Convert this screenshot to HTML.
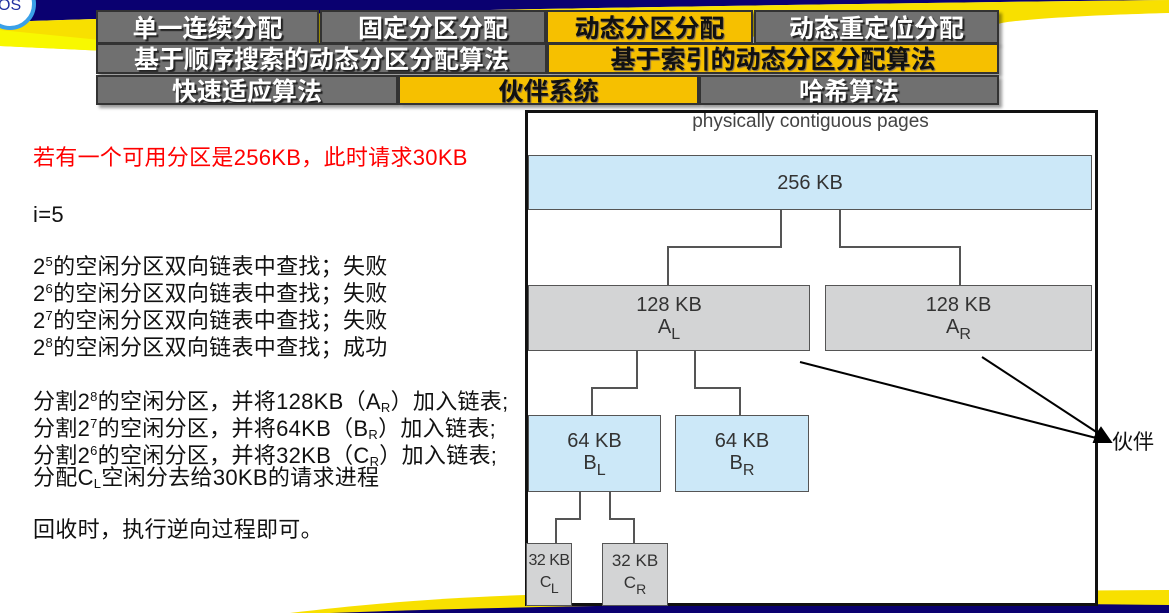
<!DOCTYPE html>
<html><head><meta charset="utf-8"><style>
*{margin:0;padding:0;box-sizing:border-box}
body{width:1169px;height:613px;position:relative;overflow:hidden;background:#fff;font-family:"Liberation Sans","Noto Sans CJK SC",sans-serif}
.bg{position:absolute;left:0;top:0}
.btn{position:absolute;background:#707070;border:2px solid #333;color:#fff;font-weight:bold;text-align:center;font-family:"Noto Sans CJK SC","WenQuanYi Zen Hei",sans-serif;text-shadow:2px 2px 1px #222;box-shadow:3px 3px 3px rgba(0,0,0,.4);white-space:nowrap;overflow:hidden;font-size:25px}
.y{background:#f6c000;color:#111;text-shadow:1px 1px 1px #765}
.t{position:absolute;left:33px;font-size:22px;letter-spacing:0.3px;color:#111;white-space:nowrap;line-height:24px;font-family:"Liberation Sans","Noto Sans CJK SC",sans-serif}
sup{font-size:13px;vertical-align:8px}
sub{font-size:13px;vertical-align:-3px}
.box{position:absolute;border:1.5px solid #555;color:#333;font-size:19px;text-align:center;line-height:22px;font-family:"Liberation Sans",sans-serif;white-space:nowrap}
.box sub{font-size:16px;vertical-align:-6px}
.b{background:#cce8f8}.g{background:#d3d4d5}
</style></head><body>
<svg class="bg" width="1169" height="613">
<path d="M0 0 H1169 V0 L1000 2 C700 6 300 12 0 22 Z" fill="#0a0070"/>
<path d="M0 22 C300 12 700 6 1000 2 L1169 0 V13 C1050 16 1000 22 999 24 L300 60 L0 46 Z" fill="#f8e000"/>
<path d="M0 30 C100 40 200 50 300 60 L0 46 Z" fill="#f8f800"/>
<path d="M290 613 C400 600 480 596 560 594 L1169 590 V613 Z" fill="#f8e000"/>
<path d="M330 613 C600 603 900 602 1169 605 V613 Z" fill="#0a0070"/>
<circle cx="10" cy="4" r="24" fill="#fff" stroke="#3aa0e8" stroke-width="4"/>
<text x="-2" y="10" font-size="16" fill="#2030a0" font-family="Liberation Sans">OS</text>
</svg>

<div class="btn" style="left:96px;top:10px;width:223px;height:34px;line-height:30px">单一连续分配</div>
<div class="btn" style="left:320px;top:10px;width:226px;height:34px;line-height:30px">固定分区分配</div>
<div class="btn y" style="left:546px;top:10px;width:207px;height:34px;line-height:30px">动态分区分配</div>
<div class="btn" style="left:754px;top:10px;width:245px;height:34px;line-height:30px">动态重定位分配</div>
<div class="btn" style="left:96px;top:43px;width:451px;height:31px;line-height:27px">基于顺序搜索的动态分区分配算法</div>
<div class="btn y" style="left:547px;top:43px;width:452px;height:31px;line-height:27px">基于索引的动态分区分配算法</div>
<div class="btn" style="left:96px;top:75px;width:302px;height:30px;line-height:26px">快速适应算法</div>
<div class="btn y" style="left:398px;top:75px;width:301px;height:30px;line-height:26px">伙伴系统</div>
<div class="btn" style="left:699px;top:75px;width:300px;height:30px;line-height:26px">哈希算法</div>

<div class="t" style="top:146px;color:#f00">若有一个可用分区是256KB，此时请求30KB</div>
<div class="t" style="top:203px">i=5</div>
<div class="t" style="top:250px">2<sup>5</sup>的空闲分区双向链表中查找；失败</div>
<div class="t" style="top:277px">2<sup>6</sup>的空闲分区双向链表中查找；失败</div>
<div class="t" style="top:304px">2<sup>7</sup>的空闲分区双向链表中查找；失败</div>
<div class="t" style="top:331px">2<sup>8</sup>的空闲分区双向链表中查找；成功</div>
<div class="t" style="top:385px">分割2<sup>8</sup>的空闲分区，并将128KB（A<sub>R</sub>）加入链表;</div>
<div class="t" style="top:412px">分割2<sup>7</sup>的空闲分区，并将64KB（B<sub>R</sub>）加入链表;</div>
<div class="t" style="top:439px">分割2<sup>6</sup>的空闲分区，并将32KB（C<sub>R</sub>）加入链表;</div>
<div class="t" style="top:466px">分配C<sub>L</sub>空闲分去给30KB的请求进程</div>
<div class="t" style="top:518px">回收时，执行逆向过程即可。</div>

<div style="position:absolute;left:525px;top:110px;width:573px;height:496px;border:3px solid #111;background:#fff"></div>
<div style="position:absolute;left:528px;top:111px;width:565px;text-align:center;font-size:19px;color:#444;line-height:22px">physically contiguous pages</div>
<svg class="bg" width="1169" height="613">
<g stroke="#555" stroke-width="2" fill="none">
<path d="M781 210 V247 H668 V285 M840 210 V247 H960 V285"/>
<path d="M637 351 V388 H592 V415 M695 351 V388 H740 V415"/>
<path d="M580 492 V519 H556 V543 M610 492 V519 H634 V543"/>
</g>
<g stroke="#000" stroke-width="2" fill="#000">
<path d="M800 362 L1104 440" fill="none"/><path d="M1110 442 L1094 442 L1098 432 Z"/>
<path d="M982 357 L1104 437" fill="none"/><path d="M1110 441 L1095 437 L1101 428 Z"/>
</g>
</svg>
<div class="box b" style="left:528px;top:155px;width:564px;height:55px;line-height:54px;font-size:20px">256 KB</div>
<div class="box g" style="left:528px;top:285px;width:282px;height:66px;padding-top:8px;font-size:20px">128 KB<br>A<sub>L</sub></div>
<div class="box g" style="left:825px;top:285px;width:267px;height:66px;padding-top:8px;font-size:20px">128 KB<br>A<sub>R</sub></div>
<div class="box b" style="left:528px;top:415px;width:133px;height:77px;padding-top:14px;font-size:20px">64 KB<br>B<sub>L</sub></div>
<div class="box b" style="left:675px;top:415px;width:134px;height:77px;padding-top:14px;font-size:20px">64 KB<br>B<sub>R</sub></div>
<div class="box g" style="left:526px;top:543px;width:46px;height:63px;padding-top:6px;font-size:16px;letter-spacing:-0.5px">32 KB<br>C<sub style="font-size:14px">L</sub></div>
<div class="box g" style="left:602px;top:543px;width:66px;height:63px;padding-top:6px;font-size:17px">32 KB<br>C<sub style="font-size:14px">R</sub></div>
<div style="position:absolute;left:1112px;top:428px;font-size:21px;color:#111;font-family:'Noto Sans CJK SC',sans-serif;line-height:26px">伙伴</div>
</body></html>
